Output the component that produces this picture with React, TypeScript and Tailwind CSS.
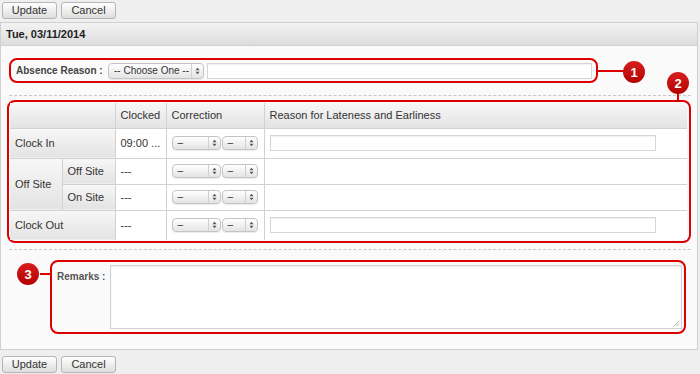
import React from "react";

function Btn({ label }: { label: string }) {
  return (
    <div className="w-[55px] h-[17px] flex items-center justify-center rounded-[3px] border border-[#b5b5b5] bg-gradient-to-b from-[#ffffff] to-[#dedede] text-[11px] text-[#333]">
      {label}
    </div>
  );
}

function Arrows() {
  return (
    <svg width="5" height="8" viewBox="0 0 5 8" className="shrink-0">
      <path d="M0.5 3.2 L2.5 0.8 L4.5 3.2 Z" fill="#555" />
      <path d="M0.5 4.8 L2.5 7.2 L4.5 4.8 Z" fill="#555" />
    </svg>
  );
}

function Sel({ w, text, h = 14 }: { w: number; text: string; h?: number }) {
  return (
    <div
      className="flex items-center rounded-[4px] border border-[#c4c4c4] bg-gradient-to-b from-[#ffffff] to-[#e4e4e4] text-[10px] text-[#333] shadow-[0_1px_1px_rgba(0,0,0,0.08)] shrink-0"
      style={{ width: w, height: h }}
    >
      <span className="flex-1 pl-[5px] leading-none truncate whitespace-nowrap">{text}</span>
      <span className="h-full border-l border-[#d0d0d0] w-[12px] flex items-center justify-center">
        <Arrows />
      </span>
    </div>
  );
}

function Pair() {
  return (
    <div className="flex items-center gap-[1px]">
      <Sel w={49} text="–" />
      <Sel w={36} text="–" />
    </div>
  );
}

function TextBox({ w }: { w: number }) {
  return <div className="h-[16px] border border-[#d6d6d6] bg-white shadow-[inset_0_1px_1px_rgba(0,0,0,0.06)]" style={{ width: w }} />;
}

function Callout({ n }: { n: string }) {
  return (
    <div className="w-[22px] h-[22px] rounded-full bg-gradient-to-b from-[#d81e1e] to-[#b30000] flex items-center justify-center text-white text-[13px] font-bold leading-none">
      {n}
    </div>
  );
}

const hd = "bg-gradient-to-b from-[#f7f7f7] to-[#e3e3e3]";
const cell = "border border-[#d2d2d2] px-[5px] text-[11px] text-[#333] font-normal text-left align-middle whitespace-nowrap";

export default function App() {
  return (
    <div
      className="w-[700px] h-[374px] bg-[#efefef] text-[11px] text-[#333] relative overflow-hidden"
      style={{ fontFamily: '"Liberation Sans", Arial, sans-serif' }}
    >
      <div className="flex gap-[4px] pl-[2px] pt-[2px]">
        <Btn label="Update" />
        <Btn label="Cancel" />
      </div>

      <div className="mt-[3px] w-[698px] h-[328px] border border-[#cfcfcf] bg-[#fafafa] relative">
        <div className="h-[23px] border-b border-[#d2d2d2] bg-gradient-to-b from-[#f3f3f3] to-[#dcdcdc] flex items-center pl-[5px] font-bold text-[#222]">
          Tue, 03/11/2014
        </div>

        <div className="pl-[8px] pr-[6px]">
          {/* Absence reason */}
          <div className="mt-[12px] w-[589px] h-[25px] border-2 border-[#d00] rounded-[8px] flex items-center pl-[5px] relative">
            <span className="font-bold text-[#444] w-[92px] shrink-0 whitespace-nowrap text-[10px]">Absence Reason :</span>
            <Sel w={96} h={16} text="-- Choose One --" />
            <div className="ml-[3px]">
              <TextBox w={385} />
            </div>
            <div className="absolute left-[587px] top-[10px] w-[26px] h-[2px] bg-[#d00]" />
            <div className="absolute left-[612px] top-[1px]">
              <Callout n="1" />
            </div>
          </div>

          <div className="mt-[12px] border-t border-dashed border-[#c8c8c8] w-[682px]" />

          {/* Table */}
          <div className="mt-[4px] -ml-[2px] w-[684px] border-2 border-[#d00] rounded-[8px] p-[1px] relative">
            <div className="absolute left-[668px] -top-[20px] w-[2px] h-[20px] bg-[#d00]" />
            <div className="absolute left-[658px] -top-[30px]">
              <Callout n="2" />
            </div>
            <table className="border-collapse w-[677px] table-fixed">
              <colgroup>
                <col className="w-[52px]" />
                <col className="w-[53px]" />
                <col className="w-[51px]" />
                <col className="w-[98px]" />
                <col />
              </colgroup>
              <tbody>
                <tr className="h-[25px]">
                  <th colSpan={2} className={`${cell} ${hd} border-t-0 border-l-0`} />
                  <th className={`${cell} ${hd} border-t-0`}>Clocked</th>
                  <th className={`${cell} ${hd} border-t-0`}>Correction</th>
                  <th className={`${cell} ${hd} border-t-0 border-r-0 rounded-tr-[6px]`}>Reason for Lateness and Earliness</th>
                </tr>
                <tr className="h-[30px]">
                  <td colSpan={2} className={`${cell} ${hd} border-l-0`}>Clock In</td>
                  <td className={`${cell} bg-white`}>09:00 ...</td>
                  <td className={`${cell} bg-white`}><Pair /></td>
                  <td className={`${cell} bg-white border-r-0`}><TextBox w={386} /></td>
                </tr>
                <tr className="h-[26px]">
                  <td rowSpan={2} className={`${cell} ${hd} border-l-0`}>Off Site</td>
                  <td className={`${cell} ${hd}`}>Off Site</td>
                  <td className={`${cell} bg-white`}>---</td>
                  <td className={`${cell} bg-white`}><Pair /></td>
                  <td className={`${cell} bg-white border-r-0`} />
                </tr>
                <tr className="h-[26px]">
                  <td className={`${cell} ${hd}`}>On Site</td>
                  <td className={`${cell} bg-white`}>---</td>
                  <td className={`${cell} bg-white`}><Pair /></td>
                  <td className={`${cell} bg-white border-r-0`} />
                </tr>
                <tr className="h-[30px]">
                  <td colSpan={2} className={`${cell} ${hd} border-l-0 border-b-0`}>Clock Out</td>
                  <td className={`${cell} bg-white border-b-0`}>---</td>
                  <td className={`${cell} bg-white border-b-0`}><Pair /></td>
                  <td className={`${cell} bg-white border-r-0 border-b-0`}><TextBox w={386} /></td>
                </tr>
              </tbody>
            </table>
          </div>

          <div className="mt-[6px] border-t border-dashed border-[#c8c8c8] w-[682px]" />

          {/* Remarks */}
          <div className="mt-[10px] ml-[41px] w-[636px] h-[74px] border-2 border-[#d00] rounded-[8px] flex items-start pl-[5px] pt-[3px] relative">
            <span className="font-bold text-[#555] w-[53px] shrink-0 whitespace-nowrap pt-[4px] text-[10px]">Remarks :</span>
            <div className="w-[572px] h-[64px] border border-[#d2d2d2] bg-white shadow-[inset_0_1px_2px_rgba(0,0,0,0.08)] relative">
              <svg width="7" height="7" viewBox="0 0 7 7" className="absolute right-[1px] bottom-[1px]">
                <path d="M6 1 L1 6 M6 3.5 L3.5 6 M6 5.5 L5.5 6" stroke="#999" strokeWidth="0.8" />
              </svg>
            </div>
            <div className="absolute -left-[12px] top-[11px] w-[11px] h-[2px] bg-[#d00]" />
            <div className="absolute -left-[35px] top-[1px]">
              <Callout n="3" />
            </div>
          </div>
        </div>
      </div>

      <div className="flex gap-[4px] pl-[2px] mt-[6px]">
        <Btn label="Update" />
        <Btn label="Cancel" />
      </div>
    </div>
  );
}
